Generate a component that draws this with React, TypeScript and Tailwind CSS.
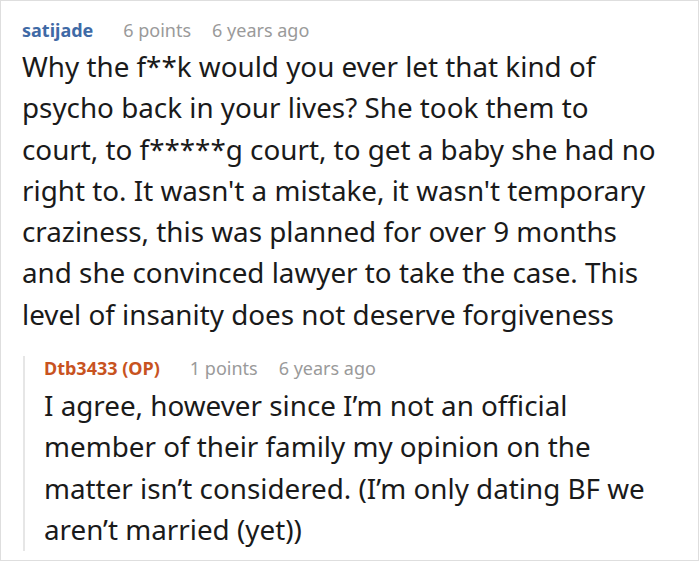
export default function App() {
  return (
    <div
      className="w-[700px] h-[562px] bg-white overflow-hidden"
      style={{ fontFamily: '"Noto Sans", "Open Sans", sans-serif' }}
    >
      <div className="h-[561px] w-[699px] border border-[#dedede] pl-[21px] pt-[17px] pr-[30px]">
        {/* top-level comment */}
        <div className="flex items-baseline text-[18px] leading-[24px]">
          <span className="font-bold text-[#3f6aa6]">satijade</span>
          <span className="ml-[30px] text-[#9a9a9a]">6 points</span>
          <span className="ml-[21px] text-[#9a9a9a]">6 years ago</span>
        </div>
        <p className="mt-[4px] text-[27.8px] leading-[41.3px] text-[#1a1a1a]">
          Why the f**k would you ever let that kind of psycho back in your lives? She took them to court, to f*****g court, to get a baby she had no right to. It wasn't a mistake, it wasn't temporary craziness, this was planned for over 9 months and she convinced lawyer to take the case. This level of insanity does not deserve forgiveness
        </p>

        {/* reply */}
        <div className="mt-[21px] ml-[1px] border-l-2 border-[#e6e6e6] pl-[19px] pb-[1px]">
          <div className="flex items-baseline text-[18px] leading-[24px]">
            <span className="font-bold text-[#c8531f]">Dtb3433 (OP)</span>
            <span className="ml-[30px] text-[#9a9a9a]">1 points</span>
            <span className="ml-[21px] text-[#9a9a9a]">6 years ago</span>
          </div>
          <p className="mt-[5px] text-[27.8px] leading-[41.3px] text-[#1a1a1a]">
            I agree, however since I’m not an official member of their family my opinion on the matter isn’t considered. (I’m only dating BF we aren’t married (yet))
          </p>
        </div>
      </div>
    </div>
  );
}
